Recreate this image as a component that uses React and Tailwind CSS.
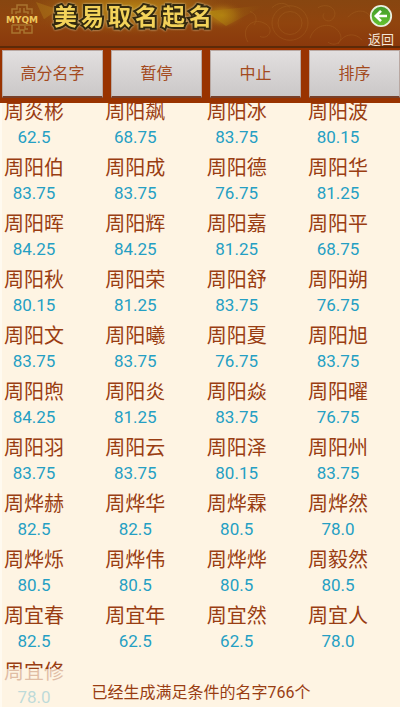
import React from 'react';

const TITLE = ['美', '易', '取', '名', '起', '名'];

const ACTIONS = ['高分名字', '暂停', '中止', '排序'];

const NAMES = [
  ['周炎彬', '62.5'], ['周阳飙', '68.75'], ['周阳冰', '83.75'], ['周阳波', '80.15'],
  ['周阳伯', '83.75'], ['周阳成', '83.75'], ['周阳德', '76.75'], ['周阳华', '81.25'],
  ['周阳晖', '84.25'], ['周阳辉', '84.25'], ['周阳嘉', '81.25'], ['周阳平', '68.75'],
  ['周阳秋', '80.15'], ['周阳荣', '81.25'], ['周阳舒', '83.75'], ['周阳朔', '76.75'],
  ['周阳文', '83.75'], ['周阳曦', '83.75'], ['周阳夏', '76.75'], ['周阳旭', '83.75'],
  ['周阳煦', '84.25'], ['周阳炎', '81.25'], ['周阳焱', '83.75'], ['周阳曜', '76.75'],
  ['周阳羽', '83.75'], ['周阳云', '83.75'], ['周阳泽', '80.15'], ['周阳州', '83.75'],
  ['周烨赫', '82.5'], ['周烨华', '82.5'], ['周烨霖', '80.5'], ['周烨然', '78.0'],
  ['周烨烁', '80.5'], ['周烨伟', '80.5'], ['周烨烨', '80.5'], ['周毅然', '80.5'],
  ['周宜春', '82.5'], ['周宜年', '62.5'], ['周宜然', '62.5'], ['周宜人', '78.0'],
  ['周宜修', '78.0'],
];

function Logo() {
  return (
    <div className="relative flex h-8 w-8 items-center justify-center">
      <svg viewBox="0 0 32 32" className="absolute inset-0 h-8 w-8" fill="none" stroke="#a9742f" strokeWidth="1.5">
        <path d="M6 10V5h5V1h10v4h5v5M10 10V8h4V4M22 10V8h-4V4" />
        <path d="M6 21v8h8v-3h4v3h8v-8M6 21h20M10 25h3v-3M22 25h-3v-3" />
      </svg>
      <span className="relative font-['DejaVu_Sans'] text-[9px] font-bold leading-none text-[#efc75c]">MYQM</span>
    </div>
  );
}

// Gold glow and faint scrollwork behind the header
function HeaderArt() {
  return (
    <svg viewBox="0 0 400 48" preserveAspectRatio="none" className="absolute inset-0 h-full w-full" aria-hidden="true">
      <defs>
        <radialGradient id="glow">
          <stop offset="0" stopColor="#bd8c14" stopOpacity="0.95" />
          <stop offset="0.5" stopColor="#a86e12" stopOpacity="0.7" />
          <stop offset="1" stopColor="#8a4410" stopOpacity="0" />
        </radialGradient>
        <linearGradient id="base" x1="0" y1="0" x2="0" y2="1">
          <stop offset="0" stopColor="#874610" />
          <stop offset="0.5" stopColor="#90440e" />
          <stop offset="1" stopColor="#8a390c" />
        </linearGradient>
        <linearGradient id="ray" x1="0" y1="0" x2="1" y2="0">
          <stop offset="0" stopColor="#b8900f" />
          <stop offset="1" stopColor="#8a4b0e" stopOpacity="0" />
        </linearGradient>
      </defs>
      <rect width="400" height="48" fill="url(#base)" />
      <ellipse cx="130" cy="10" rx="115" ry="28" fill="url(#glow)" />
      <ellipse cx="222" cy="16" rx="24" ry="15" fill="url(#glow)" />
      <path d="M206 12L266 5L226 27Z" fill="url(#ray)" opacity="0.8" />
      <path d="M36 2l22 8-14 10z" fill="#b98a1c" opacity="0.35" />
      <g fill="none" stroke="#b0702a" strokeWidth="1" opacity="0.3">
        <circle cx="290" cy="24" r="18" />
        <circle cx="290" cy="24" r="12" />
        <path d="M248 44c-8-14 4-26 16-20s4 18-4 14M310 40c4-14 20-18 28-8s-2 18-10 12M318 8c10-6 20 2 16 10s-14 2-10-4M348 18c8-10 22-8 24 4M272 8c6-6 14-6 18 0M338 46c6-12 18-12 24-4M250 12c6 2 8 8 4 14" />
      </g>
    </svg>
  );
}

function BackIcon() {
  return (
    <svg viewBox="0 0 24 24" className="h-6 w-6" aria-hidden="true">
      <defs>
        <linearGradient id="green" x1="0" y1="0" x2="0" y2="1">
          <stop offset="0" stopColor="#3f9a2c" />
          <stop offset="1" stopColor="#67c32f" />
        </linearGradient>
      </defs>
      <circle cx="12" cy="12" r="10.2" fill="url(#green)" stroke="#e9efe0" strokeWidth="1.8" />
      <path d="M18 12H8M12 6.8L6.8 12l5.2 5.2" fill="none" stroke="#fff" strokeWidth="2.6" />
    </svg>
  );
}

export default function App() {
  return (
    <div className="flex h-dvh flex-col overflow-hidden bg-[#fef4e3] font-['Roboto','Noto_Sans_CJK_SC',sans-serif] text-[#993d12]">
      {/* Header */}
      <header className="relative flex h-12 shrink-0 items-start border-b-2 border-[#5c2a08] pl-1.5">
        <HeaderArt />
        <div className="relative mt-1">
          <Logo />
        </div>
        <h1 className="relative ml-4 mt-0.5 flex gap-1 text-[23px] font-bold leading-8 text-[#f3d35a] [-webkit-text-stroke:4px_#33290f] [paint-order:stroke_fill] drop-shadow-[0_0_1px_#d9caa0]">
          {TITLE.map((char, index) => (
            <span key={index}>{char}</span>
          ))}
        </h1>
        <button className="relative ml-auto mr-1.5 mt-1 flex flex-col items-center gap-1 text-[13px] leading-4 text-[#f3e6d8]">
          <BackIcon />
          返回
        </button>
      </header>

      {/* Actions */}
      <nav className="grid shrink-0 grid-cols-[10fr_9fr_9fr_9fr] gap-2 bg-[#993300] pb-[5px] pl-0.5 pt-0.5">
        {ACTIONS.map((label) => (
          <button
            key={label}
            className="h-12 border border-b-2 border-[#b9a8a2] border-b-[#77402a] bg-linear-to-b from-[#e2dfdf] to-[#cbc8c8] text-base text-[#a34a20]"
          >
            {label}
          </button>
        ))}
      </nav>

      {/* Names, scrolled a little past the first row */}
      <main className="relative min-h-0 flex-1 overflow-hidden border-l-2 border-[#fffaf0]">
        <ul className="-mt-[5px] grid grid-cols-[repeat(4,auto)] justify-between gap-y-1.5 pl-0.5 pr-8">
          {NAMES.map(([name, score]) => (
            <li key={name} className="text-center">
              <div className="text-xl leading-7">{name}</div>
              <div className="text-[17px] leading-[22px] text-[#259fc3]">{score}</div>
            </li>
          ))}
        </ul>
        <p className="absolute inset-x-0 bottom-0 h-[38px] bg-[#fef4e3]/70 pt-3 text-center text-base">
          已经生成满足条件的名字766个
        </p>
      </main>
    </div>
  );
}
